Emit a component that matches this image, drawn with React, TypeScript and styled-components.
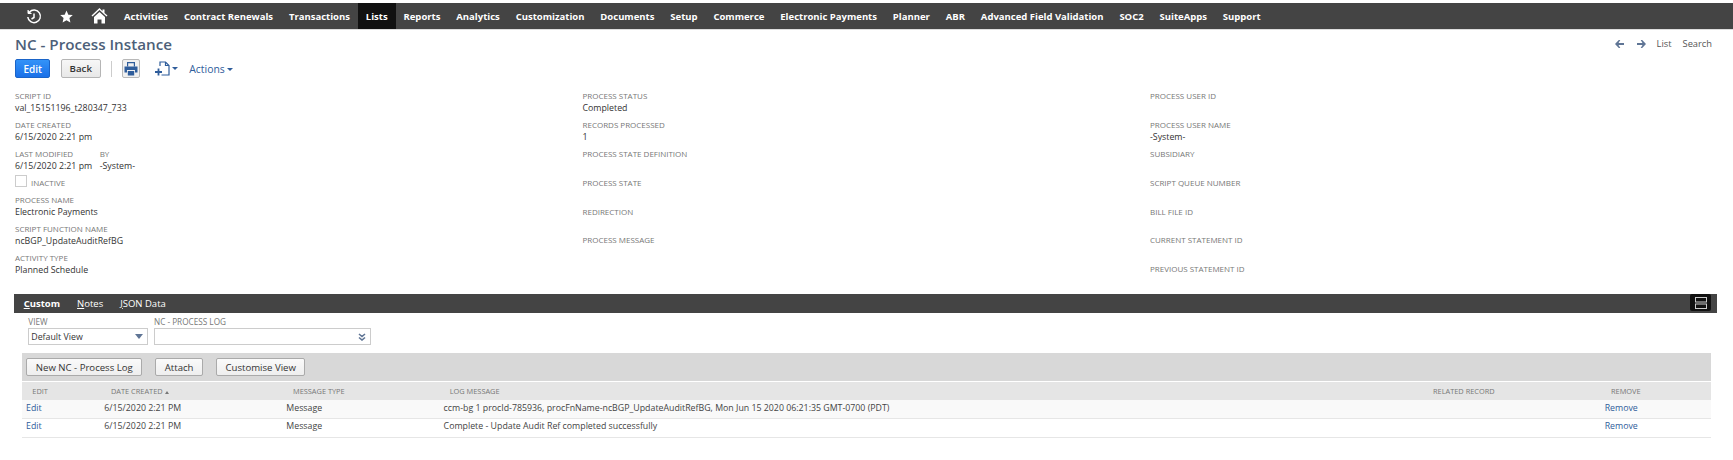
import React from 'react';
import styled, { createGlobalStyle } from 'styled-components';

const GlobalStyle = createGlobalStyle`
  * { box-sizing: border-box; }
  html, body {
    margin: 0;
    padding: 0;
    background: #fff;
    font-family: "Open Sans", "Liberation Sans", sans-serif;
    font-size: 9px;
    color: #333;
  }
`;

const Page = styled.div`
  width: 1733px;
  height: 460px;
  overflow: hidden;
  padding-top: 3px;
`;

const NavBar = styled.nav`
  height: 27px;
  background: #444;
  display: flex;
  align-items: stretch;
  padding-left: 22px;
  border-bottom: 1px solid #ddd;
`;

const NavIcons = styled.div`
  display: flex;
  gap: 8.5px;
  margin-right: 5px;
`;

const NavIcon = styled.div`
  width: 24px;
  display: flex;
  align-items: center;
  justify-content: center;
  svg { display: block; }
`;

const NavItem = styled.div<{ $active?: boolean }>`
  display: flex;
  align-items: center;
  padding: 0 7.95px;
  font-size: 9.5px;
  font-weight: 700;
  color: #fff;
  background: ${p => (p.$active ? '#111' : 'transparent')};
`;

const TitleRow = styled.div`
  display: flex;
  justify-content: space-between;
  align-items: center;
  padding: 3px 21px 0 15px;
  height: 24px;
`;

const Title = styled.h1`
  margin: 0;
  font-size: 15.2px;
  font-weight: 600;
  color: #4d5f79;
`;

const TopLinks = styled.div`
  display: flex;
  align-items: center;
  gap: 11px;
  font-size: 9.3px;
  color: #555;
`;

const ArrowGroup = styled.div`
  display: flex;
  gap: 13px;
`;

const ArrowSvg = styled.svg<{ $flip?: boolean }>`
  display: block;
  fill: #5f7595;
  transform: ${p => (p.$flip ? 'scaleX(-1)' : 'none')};
`;

const Toolbar = styled.div`
  display: flex;
  align-items: center;
  padding: 0 15.3px;
  height: 22px;
  margin-top: 3.5px;
`;

const PrimaryButton = styled.button`
  width: 35px;
  height: 19px;
  border: 1px solid #1a64c8;
  border-radius: 2px;
  background: linear-gradient(#3393f8, #1a70e8);
  color: #fff;
  font: 600 10px "Open Sans", sans-serif;
  padding: 0;
`;

const BackButton = styled.button`
  width: 40px;
  height: 19px;
  margin-left: 10.5px;
  border: 1px solid #b5b5b5;
  border-radius: 2px;
  background: linear-gradient(#f7f7f7, #e8e8e8);
  color: #333;
  font: 600 9.7px "Open Sans", sans-serif;
  padding: 0;
`;

const Divider = styled.div`
  width: 1px;
  height: 16px;
  background: #ccc;
  margin: 0 10px;
`;

const IconButton = styled.div`
  width: 18px;
  height: 19px;
  border: 1px solid #b8b8b8;
  border-radius: 2px;
  background: #f0f0f0;
  display: flex;
  align-items: center;
  justify-content: center;
`;

const NewRecord = styled.div`
  display: flex;
  align-items: center;
  margin-left: 15px;
`;

const ActionsLink = styled.span`
  font-size: 10.4px;
  color: #2f5d9b;
  margin-left: 11px;
`;

const Caret = styled.span`
  display: inline-block;
  width: 0;
  height: 0;
  border-left: 3px solid transparent;
  border-right: 3px solid transparent;
  border-top: 3px solid #2f5d9b;
  margin-left: 2.5px;
  vertical-align: middle;
`;

const FieldGrid = styled.div`
  display: grid;
  grid-template-columns: 567.5px 567.5px 1fr;
  padding: 10.5px 0 0 15px;
  height: 214.5px;
`;

const FieldColumn = styled.div`
  display: flex;
  flex-direction: column;
`;

const Field = styled.div<{ $short?: boolean }>`
  height: ${p => (p.$short ? 27 : 28.9)}px;
`;

const FieldLabel = styled.div`
  font-size: 8px;
  line-height: 12px;
  color: #777;
  text-transform: uppercase;
`;

const FieldValue = styled.div`
  font-size: 8.8px;
  line-height: 12px;
  color: #333;
`;

const PairRow = styled.div`
  display: flex;
  gap: 7.5px;
`;

const CheckRow = styled.div`
  height: 19px;
  display: flex;
  align-items: flex-start;
  gap: 4px;
`;

const CheckBox = styled.div`
  width: 12px;
  height: 12px;
  border: 1px solid #ccc;
`;

const CheckLabel = styled(FieldLabel)`
  padding-top: 2px;
`;

const TabBar = styled.div`
  margin-left: 14px;
  width: 1703px;
  height: 19px;
  background: #444;
  display: flex;
  align-items: center;
  padding-left: 9.7px;
  gap: 17px;
  position: relative;
`;

const Tab = styled.span<{ $active?: boolean }>`
  font-size: 9.5px;
  font-weight: ${p => (p.$active ? 700 : 400)};
  color: #fff;
`;

const LayoutToggle = styled.div`
  position: absolute;
  right: 6px;
  top: 0;
  width: 21px;
  height: 17px;
  background: #111;
  border-radius: 2px;
  display: flex;
  align-items: center;
  justify-content: center;
`;

const FilterRow = styled.div`
  display: flex;
  gap: 6.3px;
  padding: 4px 0 0 28.3px;
  height: 40px;
`;

const FilterLabel = styled.div`
  font-size: 8.2px;
  line-height: 10px;
  color: #777;
`;

const SelectBox = styled.div<{ $w: number }>`
  width: ${p => p.$w}px;
  height: 17px;
  border: 1px solid #ccc;
  display: flex;
  align-items: center;
  justify-content: space-between;
  padding: 0 4px 0 2px;
  font-size: 8.8px;
  color: #333;
  margin-top: 1px;
`;

const ListPanel = styled.div`
  margin-left: 22px;
  width: 1688.5px;
`;

const ListToolbar = styled.div`
  height: 28px;
  background: #d8d8d8;
  display: flex;
  align-items: center;
  gap: 13px;
  padding-left: 4.3px;
`;

const ListButton = styled.button`
  height: 18.5px;
  padding: 0 8.5px;
  border: 1px solid #aaa;
  border-radius: 2px;
  background: linear-gradient(#fafafa, #eee);
  color: #333;
  font: 400 9.6px "Open Sans", sans-serif;
`;

const Row = styled.div`
  display: grid;
  grid-template-columns: 82.3px 182px 157.3px 983.4px 177.7px 1fr;
  align-items: center;
`;

const HeaderRow = styled(Row)`
  height: 18px;
  margin-top: 1px;
  background: #e5e5e5;
  font-size: 7.4px;
  color: #777;
`;

const DataRow = styled(Row)<{ $striped?: boolean }>`
  height: 18.8px;
  font-size: 8.8px;
  color: #444;
  background: ${p => (p.$striped ? '#f9f9f9' : '#fff')};
  border-bottom: 1px solid #e6e6e6;
`;

const HeaderCell = styled.div<{ $indent: number }>`
  padding-left: ${p => p.$indent}px;
`;

const Cell = styled.div<{ $indent?: number; $link?: boolean }>`
  padding-left: ${p => p.$indent ?? 0}px;
  padding-bottom: 2.5px;
  color: ${p => (p.$link ? '#2f5d9b' : 'inherit')};
`;

const SortArrow = styled.span`
  display: inline-block;
  width: 0;
  height: 0;
  border-left: 2.5px solid transparent;
  border-right: 2.5px solid transparent;
  border-bottom: 3px solid #777;
  margin-left: 2px;
  vertical-align: middle;
`;

const HistoryIcon = () => (
  <svg width="16" height="17" viewBox="0 0 16 17" fill="none" stroke="#fff" strokeWidth="1.5">
    <path d="M3.5 4A6.3 6.3 0 1 1 1.8 9" />
    <path d="M2 2v3.5h3.5" fill="#fff" strokeWidth="1" />
    <path d="M8 5.5v4l-2.500 1.500" />
  </svg>
);

const StarIcon = () => (
  <svg width="13" height="13" viewBox="0 0 24 24" fill="#fff">
    <path d="M12 1l3.400 7.600 8.200.8-6.200 5.500 1.800 8.100L12 18.800 4.800 23l1.800-8.100L.4 9.400l8.200-.8z" />
  </svg>
);

const HomeIcon = () => (
  <svg width="17" height="16" viewBox="0 0 17 16" fill="#fff">
    <path d="M8.500 0L0.500 7.500l1 1L8.500 2l7 6.500 1-1L13.500 5V1.500h-2v1.700z" />
    <path d="M3 9l5.500-5 5.500 5v6.500h-3.500v-4h-4v4H3z" />
  </svg>
);

const ArrowIcon = ({ flip }: { flip?: boolean }) => (
  <ArrowSvg $flip={flip} width="9" height="8" viewBox="0 0 9 8">
    <path d="M0 4L3.800 0h1.500L3.500 3H9v2H3.500l1.800 3H3.800z" />
  </ArrowSvg>
);

const PrintIcon = () => (
  <svg width="14" height="14" viewBox="0 0 14 14" fill="#2f5d9b">
    <path d="M3 0h8v4.500H9.800V1.300H4.200v3.200H3z" />
    <path d="M0.500 4.500h13v6H11V8H3v2.500H0.500z" />
    <path d="M3.800 9h6.400v4.500H3.800z" />
  </svg>
);

const NewRecordIcon = () => (
  <svg width="15" height="15" viewBox="0 0 15 15" fill="none" stroke="#2f5d9b" strokeWidth="1.2">
    <path d="M5 5V1h5.500L14 4.500v9.500H6.500" />
    <path d="M10.500 1v3.500H14" />
    <path d="M3.500 7.500v7M0 11h7" strokeWidth="1.8" />
  </svg>
);

const DoubleChevron = () => (
  <svg width="8" height="8" viewBox="0 0 8 8" fill="none" stroke="#5f7595" strokeWidth="1.6">
    <path d="M1 1l3 2.500L7 1M1 4.500L4 7l3-2.500" />
  </svg>
);

const SelectArrow = () => (
  <svg width="8" height="5" viewBox="0 0 8 5" fill="#5f7595">
    <path d="M0 0h8L4 5z" />
  </svg>
);

const ToggleIcon = () => (
  <svg width="12" height="12" viewBox="0 0 12 12" fill="none" stroke="#ccc" strokeWidth="1">
    <rect x=".5" y=".5" width="11" height="4.5" />
    <rect x=".5" y="7" width="11" height="4.5" />
  </svg>
);

const navItems = [
  'Activities', 'Contract Renewals', 'Transactions', 'Lists', 'Reports', 'Analytics',
  'Customization', 'Documents', 'Setup', 'Commerce', 'Electronic Payments', 'Planner',
  'ABR', 'Advanced Field Validation', 'SOC2', 'SuiteApps', 'Support',
];

const middleFields = [
  ['Process Status', 'Completed'],
  ['Records Processed', '1'],
  ['Process State Definition', ''],
  ['Process State', ''],
  ['Redirection', ''],
  ['Process Message', ''],
];

const rightFields = [
  ['Process User ID', ''],
  ['Process User Name', '-System-'],
  ['Subsidiary', ''],
  ['Script Queue Number', ''],
  ['Bill File ID', ''],
  ['Current Statement ID', ''],
  ['Previous Statement ID', ''],
];

const logRows = [
  'ccm-bg 1 procId-785936, procFnName-ncBGP_UpdateAuditRefBG, Mon Jun 15 2020 06:21:35 GMT-0700 (PDT)',
  'Complete - Update Audit Ref completed successfully',
];

const App: React.FC = () => (
  <Page>
    <GlobalStyle />
    <NavBar>
      <NavIcons>
        <NavIcon><HistoryIcon /></NavIcon>
        <NavIcon><StarIcon /></NavIcon>
        <NavIcon><HomeIcon /></NavIcon>
      </NavIcons>
      {navItems.map(item => (
        <NavItem key={item} $active={item === 'Lists'}>{item}</NavItem>
      ))}
    </NavBar>

    <TitleRow>
      <Title>NC - Process Instance</Title>
      <TopLinks>
        <ArrowGroup>
          <ArrowIcon />
          <ArrowIcon flip />
        </ArrowGroup>
        <span>List</span>
        <span>Search</span>
      </TopLinks>
    </TitleRow>

    <Toolbar>
      <PrimaryButton>Edit</PrimaryButton>
      <BackButton>Back</BackButton>
      <Divider />
      <IconButton><PrintIcon /></IconButton>
      <NewRecord><NewRecordIcon /><Caret /></NewRecord>
      <ActionsLink>Actions<Caret /></ActionsLink>
    </Toolbar>

    <FieldGrid>
      <FieldColumn>
        <Field><FieldLabel>Script ID</FieldLabel><FieldValue>val_15151196_t280347_733</FieldValue></Field>
        <Field><FieldLabel>Date Created</FieldLabel><FieldValue>6/15/2020 2:21 pm</FieldValue></Field>
        <Field $short>
          <PairRow>
            <div><FieldLabel>Last Modified</FieldLabel><FieldValue>6/15/2020 2:21 pm</FieldValue></div>
            <div><FieldLabel>By</FieldLabel><FieldValue>-System-</FieldValue></div>
          </PairRow>
        </Field>
        <CheckRow><CheckBox /><CheckLabel>Inactive</CheckLabel></CheckRow>
        <Field><FieldLabel>Process Name</FieldLabel><FieldValue>Electronic Payments</FieldValue></Field>
        <Field><FieldLabel>Script Function Name</FieldLabel><FieldValue>ncBGP_UpdateAuditRefBG</FieldValue></Field>
        <Field><FieldLabel>Activity Type</FieldLabel><FieldValue>Planned Schedule</FieldValue></Field>
      </FieldColumn>
      <FieldColumn>
        {middleFields.map(([label, value]) => (
          <Field key={label}><FieldLabel>{label}</FieldLabel><FieldValue>{value}</FieldValue></Field>
        ))}
      </FieldColumn>
      <FieldColumn>
        {rightFields.map(([label, value]) => (
          <Field key={label}><FieldLabel>{label}</FieldLabel><FieldValue>{value}</FieldValue></Field>
        ))}
      </FieldColumn>
    </FieldGrid>

    <TabBar>
      <Tab $active><u>C</u>ustom</Tab>
      <Tab><u>N</u>otes</Tab>
      <Tab><u>J</u>SON Data</Tab>
      <LayoutToggle><ToggleIcon /></LayoutToggle>
    </TabBar>

    <FilterRow>
      <div>
        <FilterLabel>VIEW</FilterLabel>
        <SelectBox $w={119.4}>Default View<SelectArrow /></SelectBox>
      </div>
      <div>
        <FilterLabel>NC - PROCESS LOG</FilterLabel>
        <SelectBox $w={217}><span /><DoubleChevron /></SelectBox>
      </div>
    </FilterRow>

    <ListPanel>
      <ListToolbar>
        <ListButton>New NC - Process Log</ListButton>
        <ListButton>Attach</ListButton>
        <ListButton>Customise View</ListButton>
      </ListToolbar>
      <HeaderRow>
        <HeaderCell $indent={10.3}>EDIT</HeaderCell>
        <HeaderCell $indent={6.7}>DATE CREATED<SortArrow /></HeaderCell>
        <HeaderCell $indent={6.7}>MESSAGE TYPE</HeaderCell>
        <HeaderCell $indent={6.1}>LOG MESSAGE</HeaderCell>
        <HeaderCell $indent={6}>RELATED RECORD</HeaderCell>
        <HeaderCell $indent={6.3}>REMOVE</HeaderCell>
      </HeaderRow>
      {logRows.map((message, i) => (
        <DataRow key={message} $striped={i === 0}>
          <Cell $indent={4} $link>Edit</Cell>
          <Cell>6/15/2020 2:21 PM</Cell>
          <Cell>Message</Cell>
          <Cell>{message}</Cell>
          <Cell />
          <Cell $link>Remove</Cell>
        </DataRow>
      ))}
    </ListPanel>
  </Page>
);

export default App;
